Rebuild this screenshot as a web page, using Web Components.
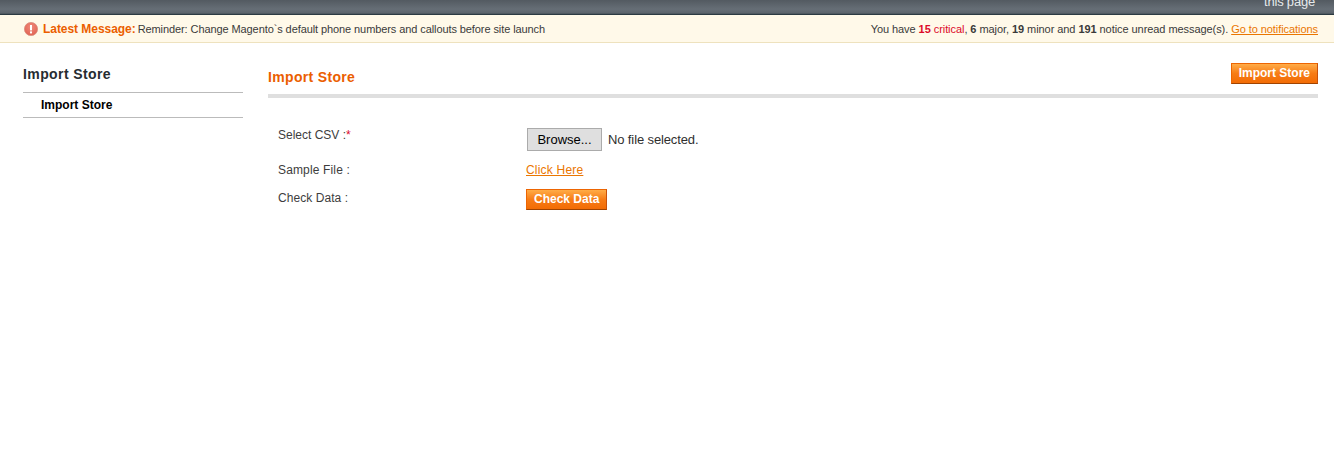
<!DOCTYPE html>
<html>
<head>
<meta charset="utf-8">
<style>
html, body { margin: 0; padding: 0; background: #fff; }
body { font: 12px "Liberation Sans", Arial, sans-serif; color: #2f2f2f; height: 454px; overflow: hidden; }
</style>
</head>
<body>
<admin-header></admin-header>
<notice-bar></notice-bar>
<div style="display:flex;padding:0 16px 0 23px;">
  <side-menu></side-menu>
  <import-page></import-page>
</div>
<script>
class AdminHeader extends HTMLElement {
    constructor() {
        super();
        this.attachShadow({mode: "open"});
        this.shadowRoot.innerHTML = `
<style>
:host { display: flex; justify-content: flex-end; height: 14px; overflow: hidden; background: linear-gradient(#535a61, #666e76 65%, #5d656d 90%, #47525a); border-bottom: 1px solid #2b3a42; padding-right: 19px; }
span { color: #e6e9eb; font-size: 13px; line-height: 15px; margin-top: -6px; letter-spacing: -.2px; }
</style>
<span>this page</span>`;
    }
}

class NoticeBar extends HTMLElement {
    constructor() {
        super();
        this.attachShadow({mode: "open"});
        this.shadowRoot.innerHTML = `
<style>
:host { display: flex; justify-content: space-between; align-items: center; height: 27px; background: #fff9e9; border-bottom: 1px solid #eee2be; padding: 0 16px 0 24px; font-size: 11px; color: #3a3a3a; }
.left { display: flex; align-items: center; }
.left span { letter-spacing: -.09px; }
.right { letter-spacing: -.065px; }
svg { margin-right: 5px; }
b.lead { color: #eb5e00; font-size: 12px; letter-spacing: -.05px; margin-right: 2px; }
.crit { color: #dc0a2a; }
a { color: #ea7601; text-decoration: underline; }
</style>
<div class="left">
  <svg width="14" height="14" viewBox="0 0 14 14"><defs><radialGradient id="g" cx=".5" cy=".35" r=".7"><stop offset="0" stop-color="#f08a7c"/><stop offset="1" stop-color="#e0604f"/></radialGradient></defs><circle cx="7" cy="7" r="6.6" fill="url(#g)" stroke="#d98f80" stroke-width=".8"/><rect x="6" y="3" width="2" height="5.4" fill="#fff"/><rect x="6" y="9.4" width="2" height="2" fill="#fff"/></svg>
  <b class="lead">Latest Message:</b><span>Reminder: Change Magento\`s default phone numbers and callouts before site launch</span>
</div>
<div class="right">You have <b class="crit">15</b> <span class="crit">critical</span>, <b>6</b> major, <b>19</b> minor and <b>191</b> notice unread message(s). <a href="#">Go to notifications</a></div>`;
    }
}

class SideMenu extends HTMLElement {
    constructor() {
        super();
        this.attachShadow({mode: "open"});
        this.shadowRoot.innerHTML = `
<style>
:host { display: block; width: 220px; flex: none; margin-right: 25px; padding-top: 22px; }
h3 { margin: 0; font-size: 14px; line-height: 18px; height: 27px; letter-spacing: .4px; color: #262c31; border-bottom: 1px solid #bbb; }
a { display: block; height: 24px; line-height: 24px; padding-left: 18px; font-size: 12px; font-weight: bold; color: #000; border-bottom: 1px solid #bbb; }
</style>
<h3>Import Store</h3>
<a>Import Store</a>`;
    }
}

class OrangeButton extends HTMLElement {
    constructor() {
        super();
        this.attachShadow({mode: "open"});
        this.shadowRoot.innerHTML = `
<style>
:host { display: inline-block; box-sizing: border-box; height: 21px; line-height: 18px; padding: 0 7px; font-size: 12px; font-weight: bold; color: #fff; white-space: nowrap;
  background: linear-gradient(#ffac47, #f77c16 50%, #f26c05); border: 1px solid #ed6502; border-right-color: #c8510a; border-bottom-color: #a04300; }
</style>
<slot></slot>`;
    }
}

class ImportPage extends HTMLElement {
    constructor() {
        super();
        this.attachShadow({mode: "open"});
        this.shadowRoot.innerHTML = `
<style>
:host { display: block; flex: 1; }
.head { display: flex; justify-content: space-between; align-items: flex-start; height: 31px; padding-top: 20px; border-bottom: 4px solid #dfdfdf; }
h3 { margin: 5px 0 0; font-size: 14px; line-height: 18px; letter-spacing: .33px; color: #eb5e00; }
.form { display: grid; grid-template-columns: 248px 1fr; grid-template-rows: 35px 27px 30px; padding: 29px 0 0 10px; color: #3d3d3d; }
label { line-height: 16px; }
label.sample { letter-spacing: .15px; }
label.last { margin-top: 1px; letter-spacing: .06px; }
.req { color: #dc0a2a; }
.file { display: flex; align-items: flex-start; font-size: 13px; color: #2f2f2f; }
.browse { box-sizing: border-box; width: 75px; height: 23px; line-height: 21px; text-align: center; background: #dfdfdf; border: 1px solid #ababab; color: #000; margin: 1px 6px 0 1px; }
.name { line-height: 23px; margin-top: 1px; letter-spacing: -.12px; }
a { color: #ea7601; text-decoration: underline; line-height: 16px; letter-spacing: .2px; }
</style>
<div class="head"><h3>Import Store</h3><orange-button>Import Store</orange-button></div>
<div class="form">
  <label>Select CSV :<span class="req">*</span></label>
  <div class="file"><span class="browse">Browse...</span><span class="name">No file selected.</span></div>
  <label class="sample">Sample File :</label>
  <div><a href="#">Click Here</a></div>
  <label class="last">Check Data :</label>
  <div><orange-button>Check Data</orange-button></div>
</div>`;
    }
}

customElements.define("admin-header", AdminHeader);
customElements.define("notice-bar", NoticeBar);
customElements.define("side-menu", SideMenu);
customElements.define("orange-button", OrangeButton);
customElements.define("import-page", ImportPage);
</script>
</body>
</html>
